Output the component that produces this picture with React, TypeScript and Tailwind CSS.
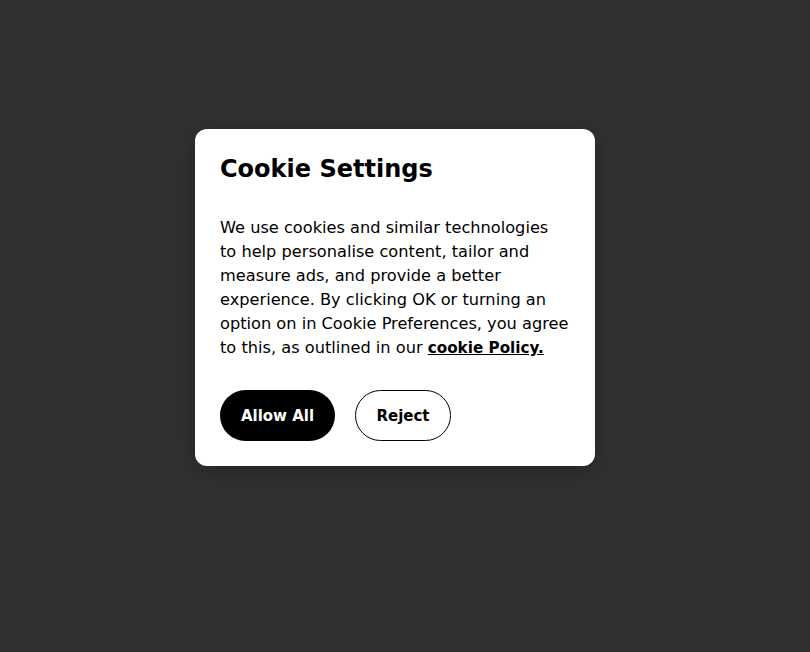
export default function App() {
    return (
        <div className="flex min-h-screen w-full items-start justify-center bg-[#333033] pt-[129px] pr-5 font-['DejaVu_Sans',sans-serif]">
            <div className="w-[400px] rounded-xl bg-white px-[25px] pt-[25px] pb-[25px] shadow-[0_4px_24px_rgba(0,0,0,0.3)]">
                <h2 className="text-[24px] leading-[30px] font-bold text-black">Cookie Settings</h2>
                <p className="mt-[32px] mr-[-12px] text-[16.2px] leading-6 text-black">
                    We use cookies and similar technologies
                    <br />
                    to help personalise content, tailor and
                    <br />
                    measure ads, and provide a better
                    <br />
                    experience. By clicking OK or turning an
                    <br />
                    option on in Cookie Preferences, you agree
                    <br />
                    to this, as outlined in our{" "}
                    <a href="#" className="text-[15.2px] font-bold underline">
                        cookie Policy.
                    </a>
                </p>
                <div className="mt-[30px] flex items-center gap-5">
                    <button className="h-[51px] w-[115px] rounded-full bg-black pt-px text-[15px] font-bold text-white">Allow All</button>
                    <button className="h-[51px] w-[96px] rounded-full border border-black bg-white pt-px text-[15px] font-bold text-black">
                        Reject
                    </button>
                </div>
            </div>
        </div>
    );
}
